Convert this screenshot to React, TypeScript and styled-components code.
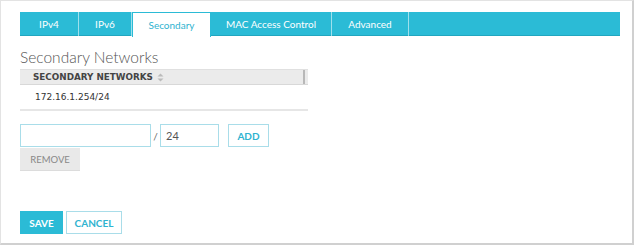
import { createGlobalStyle } from 'styled-components'
import styled, { css } from 'styled-components'

const GlobalStyle = createGlobalStyle`
  html, body {
    margin: 0;
    padding: 0;
    background: #fff;
  }
`

const cyan = '#2bbbd6'
const cyanText = '#2fb3d0'
const paleBorder = '#a9dde9'

const Panel = styled.div`
  box-sizing: border-box;
  width: 634px;
  height: 245px;
  border: 1px solid #e3e3e3;
  border-right: 2px solid #d0d0d0;
  border-bottom: 2px solid #d0d0d0;
  padding: 11px 12px 0 19px;
  font-family: Lato, 'Open Sans', sans-serif;
`

const TabBar = styled.div`
  display: flex;
  width: 600px;
  height: 24px;
  box-sizing: border-box;
  background: ${cyan};
  border-bottom: 1px solid #22a6bf;
`

const Tab = styled.div<{ w: number; active?: boolean }>`
  box-sizing: border-box;
  width: ${(p) => p.w}px;
  height: 24px;
  display: flex;
  align-items: center;
  justify-content: center;
  font-size: 10px;
  color: #fff;
  border-right: 1px solid rgba(255, 255, 255, 0.55);

  ${(p) => p.active &&
    css`
      background: #fff;
      color: ${cyanText};
      border: 1px solid ${cyan};
      border-bottom: none;
      height: 25px;
    `}
`

const Heading = styled.h2`
  margin: 11px 0 2px;
  font-size: 15.5px;
  line-height: 20px;
  font-weight: 300;
  color: #555;
`

const Table = styled.div`
  width: 288px;
`

const HeadRow = styled.div`
  display: flex;
  align-items: center;
  height: 16px;
  box-sizing: border-box;
  background: #ebebeb;
  border-top: 1px solid #e0e0e0;
  border-bottom: 1px solid #d8d8d8;
  padding-left: 13px;
  font-family: 'DejaVu Sans', Verdana, sans-serif;
  font-size: 8.8px;
  font-weight: bold;
  color: #444;
  position: relative;
`

const HeadEdge = styled.div`
  position: absolute;
  right: 3px;
  top: 0;
  bottom: 0;
  width: 2px;
  background: #b8b8b8;
`

const BodyRow = styled.div`
  display: flex;
  align-items: center;
  height: 26px;
  box-sizing: border-box;
  border-bottom: 2px solid #e6e6e6;
  padding-left: 15px;
  font-family: 'DejaVu Sans', Verdana, sans-serif;
  font-size: 9px;
  color: #333;
`

const FormRow = styled.div`
  display: flex;
  align-items: center;
  margin-top: 13px;
  height: 23px;
`

const Input = styled.div<{ w: number }>`
  box-sizing: border-box;
  width: ${(p) => p.w}px;
  height: 23px;
  border: 1px solid ${paleBorder};
  font-size: 11px;
  color: #555;
  display: flex;
  align-items: center;
  padding-left: 5px;
`

const Slash = styled.span`
  width: 9px;
  text-align: center;
  font-size: 10px;
  color: #666;
`

const Button = styled.div<{ w: number; kind: 'outline' | 'grey' | 'solid' }>`
  box-sizing: border-box;
  width: ${(p) => p.w}px;
  height: 23px;
  display: flex;
  align-items: center;
  justify-content: center;
  font-size: 10px;
  font-weight: bold;

  ${(p) => p.kind === 'outline' &&
    css`
      border: 1px solid ${paleBorder};
      color: ${cyanText};
    `}
  ${(p) => p.kind === 'grey' &&
    css`
      background: #e9e9e9;
      border-bottom: 1px solid #dcdcdc;
      color: #888;
      font-weight: normal;
      font-size: 9.5px;
    `}
  ${(p) => p.kind === 'solid' &&
    css`
      background: ${cyan};
      color: #fff;
    `}
`

const AddButton = styled(Button)`
  margin-left: 9px;
`

const RemoveButton = styled(Button)`
  margin-top: 1px;
`

const Actions = styled.div`
  display: flex;
  gap: 3px;
  margin-top: 40px;
`

const SortIcon = () => (
  <svg width='7' height='9' viewBox='0 0 7 9' style={{ marginLeft: 4 }}>
    <path d='M3.5 0.5 L6.5 3.5 L0.5 3.5 Z' fill='#bbb' />
    <path d='M3.5 8.5 L6.5 5.5 L0.5 5.5 Z' fill='#bbb' />
  </svg>
)

export default function App() {
  return (
    <>
      <GlobalStyle />
      <Panel>
        <TabBar>
          <Tab w={59}>IPv4</Tab>
          <Tab w={53}>IPv6</Tab>
          <Tab w={79} active>Secondary</Tab>
          <Tab w={121}>MAC Access Control</Tab>
          <Tab w={77}>Advanced</Tab>
        </TabBar>
        <Heading>Secondary Networks</Heading>
        <Table>
          <HeadRow>
            SECONDARY NETWORKS
            <SortIcon />
            <HeadEdge />
          </HeadRow>
          <BodyRow>172.16.1.254/24</BodyRow>
        </Table>
        <FormRow>
          <Input w={131} />
          <Slash>/</Slash>
          <Input w={59}>24</Input>
          <AddButton w={41} kind='outline'>ADD</AddButton>
        </FormRow>
        <RemoveButton w={60} kind='grey'>REMOVE</RemoveButton>
        <Actions>
          <Button w={43} kind='solid'>SAVE</Button>
          <Button w={56} kind='outline'>CANCEL</Button>
        </Actions>
      </Panel>
    </>
  )
}
